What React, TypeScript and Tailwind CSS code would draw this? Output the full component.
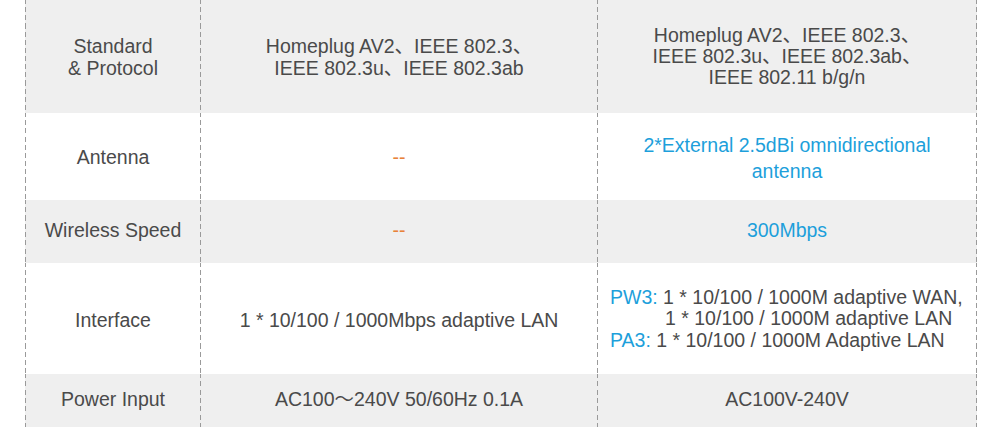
import React from 'react';

const BLUE = 'text-[#1d9fdb]';
const LINE =
  'border-solid [border-image:repeating-linear-gradient(to_bottom,#9a9a9a_0_5px,transparent_5px_8px)_1]';

interface RowProps {
  label: React.ReactNode;
  a: React.ReactNode;
  b: React.ReactNode;
  gray?: boolean;
  h: string;
}

const Row: React.FC<RowProps> = ({ label, a, b, gray, h }) => (
  <div className={`grid grid-cols-[175px_397px_380px] ${h} ${gray ? 'bg-[#efefef]' : 'bg-white'}`}>
    <div className={`flex items-center justify-center text-center border-l ${LINE}`}>{label}</div>
    <div className={`flex items-center justify-center text-center border-l ${LINE}`}>{a}</div>
    <div className={`flex items-center justify-center text-center border-l border-r ${LINE}`}>{b}</div>
  </div>
);

const Dash = () => <span className="text-[#e8823a]">--</span>;

export default function App() {
  return (
    <div
      className="w-[1000px] h-[446px] bg-white pl-[25px] text-[19.5px] leading-[22px] text-[#4a4a4a]"
      style={{ fontFamily: '"Liberation Sans", "Noto Sans CJK SC", sans-serif' }}
    >
      <div className="w-[952px] flex flex-col">
        <Row
          gray
          h="h-[113px]"
          label={<div>Standard<br />&amp; Protocol</div>}
          a={<div>Homeplug AV2、IEEE 802.3、<br />IEEE 802.3u、IEEE 802.3ab</div>}
          b={<div className="leading-[21px] -mt-[1px]">Homeplug AV2、IEEE 802.3、<br />IEEE 802.3u、IEEE 802.3ab、<br />IEEE 802.11 b/g/n</div>}
        />
        <Row
          h="h-[87px]"
          label="Antenna"
          a={<Dash />}
          b={<div className={`${BLUE} leading-[26px] mt-[3px]`}>2*External 2.5dBi omnidirectional<br />antenna</div>}
        />
        <Row
          gray
          h="h-[63px]"
          label={<span className="-mt-[3px]">Wireless Speed</span>}
          a={<span className="-mt-[3px]"><Dash /></span>}
          b={<span className={`${BLUE} -mt-[3px]`}>300Mbps</span>}
        />
        <Row
          h="h-[111px]"
          label={<span className="mt-[2px]">Interface</span>}
          a={<span className="mt-[2px]">1 * 10/100 / 1000Mbps adaptive LAN</span>}
          b={
            <div className="text-left w-full pl-[12px] leading-[21.5px] mt-[1px]">
              <div><span className={BLUE}>PW3:</span> 1 * 10/100 / 1000M adaptive WAN,</div>
              <div className="pl-[55px]">1 * 10/100 / 1000M adaptive LAN</div>
              <div><span className={BLUE}>PA3:</span> 1 * 10/100 / 1000M Adaptive LAN</div>
            </div>
          }
        />
        <Row
          gray
          h="h-[53px]"
          label={<span className="-mt-[4px]">Power Input</span>}
          a={<span className="-mt-[4px]">AC100～240V 50/60Hz 0.1A</span>}
          b={<span className="-mt-[4px]">AC100V-240V</span>}
        />
      </div>
    </div>
  );
}
